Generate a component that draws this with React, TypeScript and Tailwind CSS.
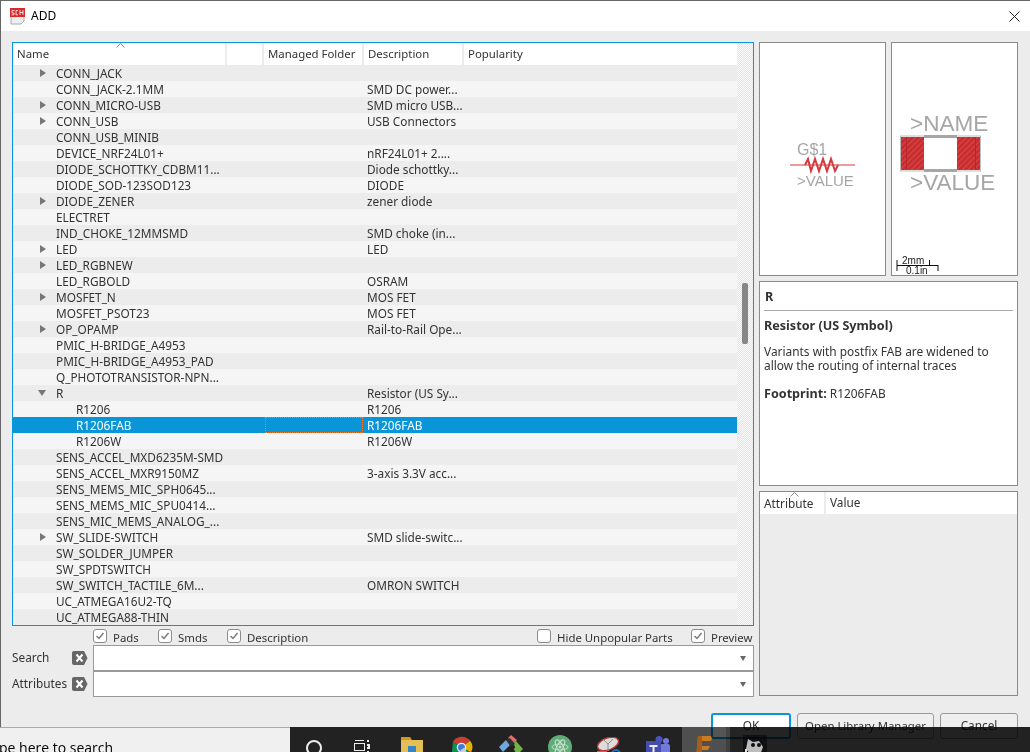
const rows: [string, string, string?][] = [
  ["CONN_JACK", "", "closed"],
  ["CONN_JACK-2.1MM", "SMD DC power..."],
  ["CONN_MICRO-USB", "SMD micro USB...", "closed"],
  ["CONN_USB", "USB Connectors", "closed"],
  ["CONN_USB_MINIB", ""],
  ["DEVICE_NRF24L01+", "nRF24L01+ 2...."],
  ["DIODE_SCHOTTKY_CDBM11...", "Diode schottky..."],
  ["DIODE_SOD-123SOD123", "DIODE"],
  ["DIODE_ZENER", "zener diode", "closed"],
  ["ELECTRET", ""],
  ["IND_CHOKE_12MMSMD", "SMD choke (in..."],
  ["LED", "LED", "closed"],
  ["LED_RGBNEW", "", "closed"],
  ["LED_RGBOLD", "OSRAM"],
  ["MOSFET_N", "MOS FET", "closed"],
  ["MOSFET_PSOT23", "MOS FET"],
  ["OP_OPAMP", "Rail-to-Rail Ope...", "closed"],
  ["PMIC_H-BRIDGE_A4953", ""],
  ["PMIC_H-BRIDGE_A4953_PAD", ""],
  ["Q_PHOTOTRANSISTOR-NPN...", ""],
  ["R", "Resistor (US Sy...", "open"],
  ["R1206", "R1206", "child"],
  ["R1206FAB", "R1206FAB", "child"],
  ["R1206W", "R1206W", "child"],
  ["SENS_ACCEL_MXD6235M-SMD", ""],
  ["SENS_ACCEL_MXR9150MZ", "3-axis 3.3V acc..."],
  ["SENS_MEMS_MIC_SPH0645...", ""],
  ["SENS_MEMS_MIC_SPU0414...", ""],
  ["SENS_MIC_MEMS_ANALOG_...", ""],
  ["SW_SLIDE-SWITCH", "SMD slide-switc...", "closed"],
  ["SW_SOLDER_JUMPER", ""],
  ["SW_SPDTSWITCH", ""],
  ["SW_SWITCH_TACTILE_6M...", "OMRON SWITCH"],
  ["UC_ATMEGA16U2-TQ", ""],
  ["UC_ATMEGA88-THIN", ""],
];

function TreeRow({ name, desc, kind, index }: { name: string; desc: string; kind?: string; index: number }) {
  const selected = name === "R1206FAB";
  const bg = selected ? "bg-[#0a95d8] text-white" : index % 2 === 0 ? "bg-[#ececec]" : "bg-[#f5f5f5]";
  return (
    <div className={`relative flex h-4 shrink-0 items-center leading-4 ${bg}`}>
      <div className="flex w-[34px] shrink-0 justify-end">
        {kind === "closed" && (
          <svg width="8" height="10" viewBox="0 0 8 10"><path d="M1 1l6 4-6 4z" fill="#777" /></svg>
        )}
        {kind === "open" && (
          <svg width="10" height="8" viewBox="0 0 10 8"><path d="M1 1h8l-4 6z" fill="#777" /></svg>
        )}
      </div>
      <div className={`w-[320px] shrink-0 whitespace-nowrap ${kind === "child" ? "pl-[29px]" : "pl-[9px]"}`}>{name}</div>
      <div className="whitespace-nowrap">{desc}</div>
      {selected && (
        <div className="absolute left-[252px] top-0 h-4 w-[98px] border border-dotted border-[#f0792b]" />
      )}
    </div>
  );
}

function Check({ label, checked, className }: { label: string; checked?: boolean; className?: string }) {
  return (
    <div className={`flex items-center gap-[6px] ${className ?? ""}`}>
      <div className="flex h-[14px] w-[14px] items-center justify-center rounded-[3px] border border-[#8c8c8c] bg-white">
        {checked && (
          <svg width="10" height="10" viewBox="0 0 10 10"><path d="M1.5 5l2.5 2.5L8.5 2" fill="none" stroke="#777" strokeWidth="1.4" /></svg>
        )}
      </div>
      <span className="relative top-[1px]">{label}</span>
    </div>
  );
}

function ClearIcon() {
  return (
    <svg width="16" height="14" viewBox="0 0 16 14">
      <path d="M2 0h10l3.5 7L12 14H2a2 2 0 0 1-2-2V2a2 2 0 0 1 2-2z" fill="#666" />
      <path d="M4.5 3.5l6 7M10.5 3.5l-6 7" stroke="#fff" strokeWidth="2" />
    </svg>
  );
}

function ComboField() {
  return (
    <div className="flex h-[26px] w-[661px] items-center justify-end border border-[#999] bg-white pr-[7px]">
      <svg width="6" height="5" viewBox="0 0 6 5"><path d="M0 0h6L3 5z" fill="#666" /></svg>
    </div>
  );
}

function SymbolPreview() {
  return (
    <svg width="125" height="232" viewBox="760 43 125 232" fontFamily="Liberation Sans, sans-serif" fill="#a6a6a6">
      <text x="797" y="155" fontSize="16" fontWeight="300">G$1</text>
      <path d="M790 165h65" stroke="#d2393c" strokeWidth="1" fill="none" />
      <path d="M805 165l3-6 3 12 4-12 4 12 4-12 4 12 4-12 4 12 3-6" stroke="#d2393c" strokeWidth="2" fill="none" />
      <text x="797" y="186" fontSize="15">&gt;VALUE</text>
    </svg>
  );
}

function PackagePreview() {
  return (
    <svg width="125" height="232" viewBox="892 43 125 232" fontFamily="Liberation Sans, sans-serif" fill="#a6a6a6">
      <defs>
        <pattern id="hatch" width="4" height="4" patternUnits="userSpaceOnUse" patternTransform="rotate(-45)">
          <rect width="4" height="4" fill="#c92d2f" />
          <rect width="4" height="1" fill="#d44a4a" />
        </pattern>
      </defs>
      <text x="910" y="131" fontSize="22.5">&gt;NAME</text>
      <rect x="900.5" y="136" width="80" height="35" fill="none" stroke="#bdbdbd" />
      <path d="M924 136.5h33M924 170.5h33" stroke="#a6a6a6" strokeWidth="3" />
      <rect x="901" y="137" width="23" height="33" fill="url(#hatch)" />
      <rect x="957" y="137" width="23" height="33" fill="url(#hatch)" />
      <path d="M906.5 137v33M975.5 137v33" stroke="#b7262a" strokeWidth="1" />
      <text x="910" y="190" fontSize="22.5">&gt;VALUE</text>
      <path d="M897 260v11M897 265.5h41M929.5 260v5M938 265v6" stroke="#111" strokeWidth="1" fill="none" />
      <text x="902" y="264" fontSize="10" fill="#222">2mm</text>
      <text x="906" y="274" fontSize="10" fill="#222">0.1in</text>
    </svg>
  );
}

function TaskbarIcons() {
  return (
    <div className="flex h-full">
      <div className="flex w-[47px] justify-center pt-3">
        <svg width="18" height="18" viewBox="0 0 18 18"><circle cx="9" cy="9" r="7" fill="none" stroke="#fff" strokeWidth="2" /></svg>
      </div>
      <div className="flex w-[49px] justify-center pt-3">
        <svg width="16" height="16" viewBox="0 0 16 16" fill="none" stroke="#fff"><rect x="0.5" y="4.5" width="10" height="7" /><path d="M1 1.5h9M1 14.5h9" /><path d="M13 2h2M13 6h2v3h-2M13 13h2" strokeWidth="2" /></svg>
      </div>
      <div className="flex w-[51px] justify-center pt-[10px]">
        <svg width="22" height="20" viewBox="0 0 22 20"><path d="M0 0h9l2 3H0z" fill="#e2a520" /><rect y="3" width="22" height="17" fill="#f6cf5c" /><rect x="7" y="9" width="8" height="6" fill="#3a8fd0" /></svg>
      </div>
      <div className="flex w-[49px] justify-center pt-[9px]">
        <svg width="23" height="23" viewBox="0 0 24 24">
          <path d="M12 12L3 6a11 11 0 0 1 18-1z" fill="#db4437" />
          <path d="M12 12l9-7a11 11 0 0 1 1 12z" fill="#f4c20d" />
          <path d="M12 12l10 5a11 11 0 0 1-20 0L3 6z" fill="#0f9d58" />
          <circle cx="12" cy="12" r="5" fill="#fff" />
          <circle cx="12" cy="12" r="3.6" fill="#4285f4" />
          <path d="M12 14l3-2 3 6H9z" fill="#ddd" />
        </svg>
      </div>
      <div className="flex w-[49px] justify-center pt-2">
        <svg width="24" height="24" viewBox="0 0 24 24">
          <path d="M9 3l3-3 6 5-3 3z" fill="#ef7a7a" />
          <path d="M0 12l7-7 4 5-7 7z" fill="#7ab6ee" />
          <path d="M12 9l5-3 7 8-6 6z" fill="#7fbf4d" />
          <path d="M7 5l4-2 5 6-4 3z" fill="#333" />
          <circle cx="14" cy="12" r="2" fill="#222" />
        </svg>
      </div>
      <div className="flex w-[49px] justify-center pt-2">
        <svg width="24" height="24" viewBox="0 0 24 24">
          <circle cx="12" cy="12" r="12" fill="#66bb7f" />
          <g fill="none" stroke="#d9f2df" strokeWidth="1">
            <ellipse cx="12" cy="12" rx="8" ry="3" />
            <ellipse cx="12" cy="12" rx="8" ry="3" transform="rotate(60 12 12)" />
            <ellipse cx="12" cy="12" rx="8" ry="3" transform="rotate(120 12 12)" />
          </g>
          <circle cx="12" cy="12" r="1.5" fill="#d9f2df" />
        </svg>
      </div>
      <div className="flex w-[49px] justify-center pt-[10px]">
        <svg width="24" height="22" viewBox="0 0 24 22">
          <ellipse cx="11" cy="7" rx="11" ry="6" transform="rotate(-20 11 7)" fill="#eee" stroke="#c8383a" strokeWidth="1.5" />
          <path d="M11 7l5-5M11 7L6 2M11 7v7" stroke="#999" />
          <circle cx="19" cy="17" r="4" fill="none" stroke="#1f7bc0" strokeWidth="2" />
          <path d="M0 14h10v8H0z" fill="#888" />
        </svg>
      </div>
      <div className="flex w-[49px] justify-center pt-[9px]">
        <svg width="24" height="23" viewBox="0 0 24 23">
          <circle cx="13" cy="3.5" r="3.5" fill="#5059c9" />
          <circle cx="20" cy="5" r="3" fill="#7b83eb" />
          <rect x="14" y="8" width="10" height="15" rx="2" fill="#7b83eb" />
          <rect y="5" width="15" height="18" fill="#4b53bc" />
          <path d="M3.5 9h8v2H8.5v8h-2v-8h-3z" fill="#fff" />
          <circle cx="20" cy="20" r="3" fill="#9ccc3c" />
        </svg>
      </div>
      <div className="flex w-[44px] justify-center bg-[#555] pt-[9px]">
        <svg width="18" height="23" viewBox="0 0 18 23">
          <path d="M3 0h15l-2 5H7v5h8l-2 4H7v9H1z" fill="#d98628" />
          <path d="M3 0h4v23H1z" fill="#b5651d" />
        </svg>
      </div>
      <div className="w-1 bg-[#444]" />
      <div className="flex w-[49px] justify-center pt-2">
        <svg width="24" height="24" viewBox="0 0 24 24">
          <rect width="24" height="24" fill="#111" />
          <path d="M5 4l5 3 6-1 4 6-3 8H8L3 14z" fill="#ccc" />
          <circle cx="10" cy="10" r="2" fill="#111" />
          <circle cx="16" cy="10" r="2" fill="#111" />
          <path d="M0 17h6v2H0zM2 14h2v8H2z" fill="#eee" />
        </svg>
      </div>
    </div>
  );
}

export default function App() {
  return (
    <div className="relative flex h-[752px] w-[1030px] flex-col overflow-hidden bg-[#ececec] font-['Noto_Sans',sans-serif] text-[11.8px] text-[#333]">
      {/* Title bar */}
      <div className="flex h-[31px] shrink-0 items-center border-l border-t border-[#666] bg-white pl-[9px] pr-[10px] text-[12px] text-black">
        <svg width="15" height="17" viewBox="0 0 15 17">
          <path d="M1 7h13v6l-3 3H1z" fill="#eee" stroke="#aaa" />
          <rect width="15" height="9" fill="#d9272b" />
          <path d="M1.5 6.8h2.5V5H2V2.5h2.5M8 2.5H6V6.8h2M10 2v5M13 2v5M10 4.5h3" fill="none" stroke="#fff" strokeWidth="0.8" />
        </svg>
        <span className="ml-[6px] flex-1">ADD</span>
        <svg width="11" height="11" viewBox="0 0 11 11"><path d="M0.5 0.5l10 10M10.5 0.5l-10 10" stroke="#222" strokeWidth="1" /></svg>
      </div>

      {/* Dialog body */}
      <div className="flex flex-1 flex-col border-l border-[#666] pl-[11px] pr-3 pt-[11px]">
        <div className="flex gap-[5px]">
          <div className="flex w-[742px] shrink-0 flex-col">
            {/* Parts tree */}
            <div className="flex h-[584px] overflow-hidden border border-[#0a95d8] bg-[#ececec]">
              <div className="flex w-[724px] shrink-0 flex-col overflow-hidden">
                <div className="relative flex h-[22px] shrink-0 items-center bg-white text-[11.4px]">
                  <svg className="absolute left-[103px] top-0" width="9" height="5" viewBox="0 0 9 5"><path d="M0.5 4.5L4.5 0.5l4 4" fill="none" stroke="#888" /></svg>
                  <div className="h-full w-[214px] border-r-2 border-[#ececec] pl-1 pt-[2px]">Name</div>
                  <div className="h-full w-[37px] border-r-2 border-[#ececec]" />
                  <div className="h-full w-[100px] border-r-2 border-[#ececec] pl-1 pt-[2px]">Managed Folder</div>
                  <div className="h-full w-[100px] border-r-2 border-[#ececec] pl-1 pt-[2px]">Description</div>
                  <div className="h-full flex-1 pl-1 pt-[2px]">Popularity</div>
                </div>
                {rows.map(([name, desc, kind], i) => (
                  <TreeRow key={name} name={name} desc={desc} kind={kind} index={i} />
                ))}
              </div>
              <div className="flex-1 bg-[repeating-conic-gradient(#e4e4e4_0_25%,#fafafa_0_50%)] bg-[length:2px_2px] pl-[5px] pt-[240px]">
                <div className="h-[61px] w-[6px] rounded-[2px] bg-[#868686]" />
              </div>
            </div>

            {/* Filter checkboxes */}
            <div className="flex h-[19px] items-end pl-[81px] text-[11.4px]">
              <Check label="Pads" checked className="w-[65px]" />
              <Check label="Smds" checked className="w-[69px]" />
              <Check label="Description" checked className="w-[310px]" />
              <Check label="Hide Unpopular Parts" className="w-[154px]" />
              <Check label="Preview" checked />
            </div>

            {/* Search fields */}
            <div className="flex h-[26px] items-center">
              <span className="w-[60px]">Search</span>
              <div className="flex w-[21px]"><ClearIcon /></div>
              <ComboField />
            </div>
            <div className="flex h-[26px] items-center">
              <span className="w-[60px]">Attributes</span>
              <div className="flex w-[21px]"><ClearIcon /></div>
              <ComboField />
            </div>
          </div>

          {/* Right column */}
          <div className="flex w-[259px] shrink-0 flex-col gap-[5px]">
            <div className="flex h-[234px] gap-[5px]">
              <div className="w-[127px] border border-[#8a8a8a] bg-white"><SymbolPreview /></div>
              <div className="w-[127px] border border-[#8a8a8a] bg-white"><PackagePreview /></div>
            </div>
            <div className="h-[205px] border border-[#8a8a8a] bg-white px-1 text-[11.9px] leading-[14px]">
              <div className="border-b border-[#aaa] pb-[6px] pl-[1px] pt-2 text-[12.6px] font-bold">R</div>
              <div className="mt-2 text-[12.6px] font-bold">Resistor (US Symbol)</div>
              <p className="mt-[11px]">Variants with postfix FAB are widened to<br />allow the routing of internal traces</p>
              <p className="mt-[14px]"><b className="text-[12.6px]">Footprint:</b> R1206FAB</p>
            </div>
            <div className="relative h-[205px] border border-[#8a8a8a] bg-[#ececec]">
              <svg className="absolute left-[30px] top-0" width="9" height="5" viewBox="0 0 9 5"><path d="M0.5 4.5L4.5 0.5l4 4" fill="none" stroke="#888" /></svg>
              <div className="flex h-[22px] items-center bg-white">
                <div className="h-full w-[66px] border-r-2 border-[#ececec] pl-1 pt-[3px]">Attribute</div>
                <div className="pl-[4px]">Value</div>
              </div>
            </div>
          </div>
        </div>

        {/* Buttons */}
        <div className="mt-4 flex justify-end gap-[6px]">
          <button className="h-[26px] w-[80px] rounded-[3px] border-2 border-[#0a95d8] bg-white">OK</button>
          <button className="h-[26px] w-[137px] rounded-[3px] border border-[#999] bg-[#efefef] text-[11.4px]">Open Library Manager</button>
          <button className="h-[26px] w-[78px] rounded-[3px] border border-[#999] bg-[#efefef]">Cancel</button>
        </div>
      </div>

      {/* Windows taskbar showing over the dialog */}
      <div className="absolute bottom-0 left-0 flex h-[25px] w-[290px] items-start overflow-hidden border-t border-[#aaa] bg-[#f0f0f0] font-['Open_Sans',sans-serif] text-[14px] text-black">
        <span className="-ml-[1px] mt-[10px] whitespace-nowrap leading-[20px]">pe here to search</span>
      </div>
      <div className="absolute bottom-0 left-[290px] right-0 h-[25px] bg-[#242424] mix-blend-multiply">
        <TaskbarIcons />
      </div>
    </div>
  );
}
